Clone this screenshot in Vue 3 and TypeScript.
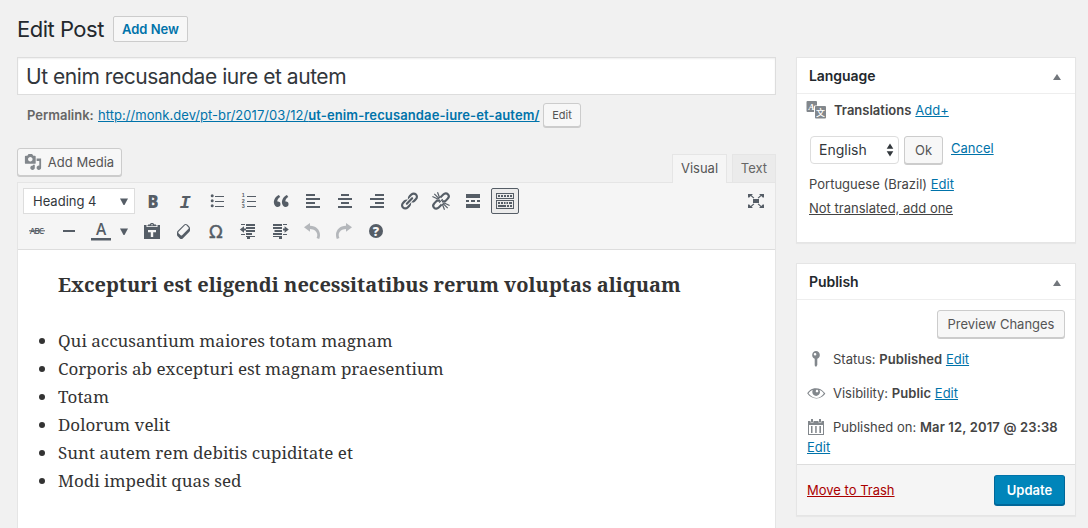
<script setup lang="ts">
interface ToolButton {
  name: string
  kind?: 'active' | 'muted' | 'arrow'
}

const postItems: string[] = [
  'Qui accusantium maiores totam magnam',
  'Corporis ab excepturi est magnam praesentium',
  'Totam',
  'Dolorum velit',
  'Sunt autem rem debitis cupiditate et',
  'Modi impedit quas sed',
]

const rowOne: ToolButton[] = [
  { name: 'bold' }, { name: 'italic' }, { name: 'ul' }, { name: 'ol' }, { name: 'quote' },
  { name: 'left' }, { name: 'center' }, { name: 'right' }, { name: 'link' }, { name: 'unlink' },
  { name: 'more' }, { name: 'sink', kind: 'active' },
]

const rowTwo: ToolButton[] = [
  { name: 'strike' }, { name: 'hr' }, { name: 'color' }, { name: 'caret', kind: 'arrow' },
  { name: 'paste' }, { name: 'eraser' }, { name: 'omega' }, { name: 'outdent' }, { name: 'indent' },
  { name: 'undo', kind: 'muted' }, { name: 'redo', kind: 'muted' }, { name: 'help' },
]

const icons: Record<string, string> = {
  bold: '<text x="10" y="16.5" text-anchor="middle" font-family="Open Sans" font-weight="800" font-size="17.5" textLength="11" lengthAdjust="spacingAndGlyphs">B</text>',
  italic: '<text x="10" y="16.5" text-anchor="middle" font-family="Liberation Mono" font-weight="700" font-style="italic" font-size="18.5">I</text>',
  ul: '<circle cx="5.2" cy="4.7" r="1.5"/><circle cx="5.2" cy="9.7" r="1.5"/><circle cx="5.2" cy="14.7" r="1.5"/><path d="M8 5h9v1H8zM8 10h9v1H8zM8 15h9v1H8z"/>',
  ol: '<g font-family="Liberation Sans" font-weight="700" font-size="5.4"><text x="2.8" y="6.4">1</text><text x="2.8" y="11.7">2</text><text x="2.8" y="17">3</text></g><path d="M8 5h9v1H8zM8 10h9v1H8zM8 15h9v1H8z"/>',
  quote: '<path d="M9.49 13.22c0-.74-.2-1.38-.61-1.9-.62-.78-1.83-.88-2.53-.72-.29-1.65 1.11-3.75 2.92-4.65L7.88 4c-2.73 1.3-5.42 4.28-4.96 8.05C3.21 14.43 4.59 16 6.54 16c.85 0 1.56-.25 2.12-.75s.83-1.18.83-2.03zm8.05 0c0-.74-.2-1.38-.61-1.9-.63-.78-1.83-.88-2.53-.72-.29-1.65 1.11-3.75 2.92-4.65L15.93 4c-2.73 1.3-5.41 4.28-4.95 8.05.29 2.38 1.66 3.95 3.61 3.95.85 0 1.56-.25 2.12-.75s.83-1.18.83-2.03z"/>',
  left: '<path d="M12 5V3H3v2h9zm5 4V7H3v2h14zm-5 4v-2H3v2h9zm5 4v-2H3v2h14z"/>',
  center: '<path d="M14 5V3H6v2h8zm3 4V7H3v2h14zm-3 4v-2H6v2h8zm3 4v-2H3v2h14z"/>',
  right: '<path d="M17 5V3H8v2h9zm0 4V7H3v2h14zm0 4v-2H8v2h9zm0 4v-2H3v2h14z"/>',
  link: '<path d="M17.74 2.76c1.68 1.69 1.68 4.41 0 6.1l-1.53 1.52c-1.12 1.12-2.7 1.47-4.14 1.09l2.62-2.61.76-.77.76-.76c.84-.84.84-2.2 0-3.04-.84-.85-2.2-.85-3.04 0l-.77.76-3.38 3.38c-.37-1.44-.02-3.02 1.1-4.14l1.52-1.53c1.69-1.68 4.42-1.68 6.1 0zM8.59 13.43l5.34-5.34c.42-.42.42-1.1 0-1.52-.44-.43-1.13-.39-1.53 0l-5.33 5.34c-.42.42-.42 1.1 0 1.52.44.43 1.13.39 1.52 0zm-.76 2.29l4.14-4.15c.38 1.44.03 3.02-1.09 4.14l-1.52 1.53c-1.69 1.68-4.41 1.68-6.1 0-1.68-1.68-1.68-4.42 0-6.1l1.53-1.52c1.12-1.12 2.7-1.47 4.14-1.1l-4.14 4.15c-.85.84-.85 2.2 0 3.05.84.84 2.2.84 3.04 0z"/>',
  unlink: '<path d="M9.300 6.500l3-3c1.500-1.500 3.400-1.500 4.600-.3s1.200 3.100-.3 4.600l-2.600 2.600h-3M10.700 13.500l-3 3c-1.500 1.500-3.400 1.500-4.600.3s-1.200-3.100.3-4.600L6 9.600h3" fill="none" stroke="currentColor" stroke-width="2.100"/><path d="M1.400 5.500l6 2.800M3.300 2.800l4.800 4.800M6.500 1.200l2.300 6M18.600 14.500l-6-2.800M16.700 17.200l-4.800-4.800M13.500 18.800l-2.300-6M8.200 11.700l3.500-3.500" fill="none" stroke="currentColor" stroke-width="1.200"/>',
  more: '<path d="M17 7V3H3v4h14zM6 11V9H3v2h3zm6 0V9H8v2h4zm5 0V9h-3v2h3zm0 6v-4H3v4h14z"/>',
  sink: '<path fill-rule="evenodd" d="M1 2h18v6H1zM2 3v4h16V3zM1 9h18v9H1zM2 10v7h16v-7z"/><path d="M3 4h2v2H3zM6 4h2v2H6zM9 4h2v2H9zM12 4h2v2h-2zM15 4h2v2h-2zM3 11h2v2H3zM6 11h2v2H6zM9 11h1.500v2H9zM11.500 11H13v2h-1.500zM14 11h3v2h-3zM3 14h8v2H3zM12 14h2v2h-2zM15 14h2v2h-2z"/>',
  strike: '<text x="10" y="13" text-anchor="middle" font-family="Open Sans" font-weight="600" font-size="8.5" textLength="14.5">ABC</text><path d="M2 9.300h16v1H2z"/>',
  hr: '<path d="M4 9h12v2H4z"/>',
  color: '<text x="10" y="14" text-anchor="middle" font-family="Open Sans" font-weight="600" font-size="15.5">A</text><path d="M0 17h20v2.500H0z"/>',
  caret: '<path d="M6 7.500h8L10.500 14h-1z"/>',
  paste: '<path d="M6 4.500V3.500h1.700C8 2.500 8.800 2 10 2s2 .5 2.300 1.500H14v1z"/><path d="M2 4h2.500v2h11V4H18v14H2z"/><path fill="#f5f5f5" d="M6 9h8v2.200h-2.800V16H8.800v-4.800H6z"/><path d="M5.500 4h9v1.200h-9z"/><circle cx="10" cy="3.700" r=".7" fill="#f5f5f5"/>',
  eraser: '<path fill-rule="evenodd" d="M14.290 4.590l1.100 1.110c.41.400.61.940.61 1.470v2.120c0 .53-.2 1.070-.61 1.470l-6.630 6.630c-.4.410-.94.610-1.470.610s-1.070-.2-1.470-.61l-1.110-1.100-1.100-1.110c-.41-.4-.61-.94-.61-1.470v-2.120c0-.54.2-1.070.61-1.480l6.630-6.620c.4-.41.940-.61 1.470-.61s1.060.2 1.470.61zM8.080 14.290l6.420-6.420c.39-.39.39-1.030 0-1.430L12.360 4.300c-.19-.19-.45-.29-.72-.29s-.52.100-.71.290L4.510 10.720c-.39.400-.39 1.040 0 1.430l2.140 2.140c.38.380 1.040.380 1.430 0z"/>',
  omega: '<text x="10" y="17" text-anchor="middle" font-family="DejaVu Sans" font-weight="400" font-size="18" stroke="currentColor" stroke-width=".4">Ω</text>',
  outdent: '<path d="M3 3h4v1H3zm5 0h9v2H8zm0 3h9v2H8zm0 3h9v2H8zm0 3h6v2H8zM3 13h4v1H3zm5 2h9v1H8zm1 1h3v2H9zM1.800 8.500L6 5.300V7.500h2v2H6v2.200z"/>',
  indent: '<path d="M3 3h9v2H3zm10 0h4v1h-4zM3 6h9v2H3zm1.500 3H12v2H4.500zM3 12h9v2H3zm10 1h4v1h-4zM3 15h9v1H3zm6 1h3v2H9zM18.800 8.500L14.600 5.300V7.500H13v2h1.600v2.200z"/>',
  undo: '<path d="M2 6.300L8 2v2.800c6 0 10 4.200 10 9.200 0 1.400-.2 2.700-.8 4l-2.600-1c.5-1 .7-2 .7-2.900C15.300 10.400 12.300 8 8 7.900v2.800z"/>',
  redo: '<path d="M18 6.300L12 2v2.800c-6 0-10 4.200-10 9.200 0 1.400.2 2.700.8 4l2.600-1c-.5-1-.7-2-.7-2.900C4.700 10.400 7.700 8 12 7.900v2.800z"/>',
  help: '<circle cx="10" cy="10" r="7"/><text x="10" y="14.6" text-anchor="middle" font-family="Open Sans" font-weight="800" font-size="12.5" fill="#f5f5f5">?</text>',
  full: '<path d="M7 8h6v4H7zM2 3h5L5.600 4.300l2.700 2.500-.8.800-2.800-2.600L3.300 6.500H2zM18 3h-5l1.400 1.300-2.700 2.500.8.800L15.300 5l1.400 1.500H18zM2 17h5l-1.400-1.300 2.700-2.500-.8-.8L4.700 15l-1.400-1.500H2zM18 17h-5l1.400-1.300-2.700-2.500.8-.8 2.800 2.600 1.400-1.500H18z"/>',
  media: '<path d="M13 11V4c0-.55-.45-1-1-1h-1.670L9 1H5L3.670 3H2c-.55 0-1 .45-1 1v7c0 .55.450 1 1 1h10c.55 0 1-.45 1-1zM7 4.500c1.380 0 2.500 1.120 2.500 2.500S8.380 9.500 7 9.500 4.500 8.380 4.500 7 5.620 4.500 7 4.500zM14 6h5v10.500c0 1.380-1.120 2.500-2.500 2.500S14 17.880 14 16.500s1.120-2.500 2.500-2.500c.17 0 .34.020.5.050V9h-3V6zm-4 8.050V13h2v3.500c0 1.380-1.120 2.500-2.500 2.500S7 17.880 7 16.500 8.120 14 9.500 14c.17 0 .34.020.5.050z"/>',
  translate: '<path d="M1.500 1H10a1 1 0 0 1 1 1v3.500H9.200A1.200 1.200 0 0 0 8 6.700V12H1.500a1 1 0 0 1-1-1V2a1 1 0 0 1 1-1z"/><path d="M10 6h9a1 1 0 0 1 1 1v10.500a1 1 0 0 1-1 1h-9a1 1 0 0 1-1-1V7a1 1 0 0 1 1-1z"/><text x="5.500" y="9.500" text-anchor="middle" font-family="Liberation Serif" font-weight="700" font-style="italic" font-size="9" fill="#fff">A</text><text x="14.500" y="15.700" text-anchor="middle" font-family="Noto Sans CJK SC" font-size="9" font-weight="500" fill="#fff">文</text>',
  pin: '<path fill-rule="evenodd" d="M10 2a4 4 0 0 1 1.300 7.700V16L10 18l-1.300-1.500V9.700A4 4 0 0 1 10 2zM9 4a1.300 1.300 0 1 0 .1 2.600A1.300 1.300 0 0 0 9 4z"/>',
  eye: '<path fill-rule="evenodd" d="M18.300 9.500C15 4.900 8.500 3.800 3.900 7.200 2.700 8.100 1.700 9.100 1.200 10.300c3.400 5.300 10.200 6.700 15.200 3.200 1.300-.9 2.400-2 2.900-3.200zM10.100 7.200c.5-.5 1.300-.5 1.800 0s.5 1.300 0 1.800-1.300.5-1.800 0-.5-1.300 0-1.800zM10.200 14.900c-3.200 0-6-1.900-7.700-4.600C3.600 8.800 5 7.600 6.800 7c-.3.600-.5 1.300-.5 2 0 2.100 1.700 3.900 3.800 3.900s3.900-1.700 3.900-3.800c0-.8-.2-1.500-.6-2.100 1.800.7 3.300 1.800 4.400 3.400-1.700 2.700-4.400 4.500-7.600 4.500z"/>',
  calendar: '<path fill-rule="evenodd" d="M2 4h2.500v1.500h3V4h5v1.500h3V4H18v14H2zM3 8v9h14V8zM5 2h2v3H5zM13 2h2v3h-2zM5 9h1.500v7H5zm4.200 0h1.500v7H9.200zm4.200 0H15v7h-1.600z"/>',
}
</script>

<template>
  <div class="page">
    <main class="main">
      <header class="heading">
        <h1>Edit Post</h1>
        <a class="btn add-new">Add New</a>
      </header>

      <div class="title-field">Ut enim recusandae iure et autem</div>

      <div class="permalink">
        <b class="plabel">Permalink:</b>
        <a class="purl"><span>http://monk.dev/pt-br/2017/03/12/</span><b>ut-enim-recusandae-iure-et-autem/</b></a>
        <button class="btn small">Edit</button>
      </div>

      <div class="tools">
        <button class="btn media"><svg viewBox="0 0 20 20" v-html="icons.media" />Add Media</button>
        <div class="tabs">
          <div class="tab current">Visual</div>
          <div class="tab">Text</div>
        </div>
      </div>

      <section class="editor">
        <div class="toolbar">
          <div class="row">
            <div class="format">Heading 4<svg viewBox="0 0 20 20" v-html="icons.caret" /></div>
            <span v-for="b in rowOne" :key="b.name" class="tool" :class="b.kind"><svg viewBox="0 0 20 20" v-html="icons[b.name]" /></span>
            <span class="tool full"><svg viewBox="0 0 20 20" v-html="icons.full" /></span>
          </div>
          <div class="row">
            <span v-for="b in rowTwo" :key="b.name" class="tool" :class="b.kind"><svg viewBox="0 0 20 20" v-html="icons[b.name]" /></span>
          </div>
        </div>
        <div class="content">
          <h4>Excepturi est eligendi necessitatibus rerum voluptas aliquam</h4>
          <ul>
            <li v-for="item in postItems" :key="item">{{ item }}</li>
          </ul>
        </div>
      </section>
    </main>

    <aside class="side">
      <section class="box language">
        <h2>Language<i class="toggle" /></h2>
        <div class="translations">
          <svg viewBox="0 0 20 20" v-html="icons.translate" />
          <b>Translations</b><a class="link">Add+</a>
        </div>
        <div class="chooser">
          <div class="select">English<svg viewBox="0 0 8 14"><path d="M4 .5l3.300 5.300H.7zM4 13.500L.7 8.200h6.600z" /></svg></div>
          <button class="btn ok">Ok</button>
          <a class="link">Cancel</a>
        </div>
        <p class="lang">Portuguese (Brazil) <a class="link">Edit</a></p>
        <p class="lang"><a class="plain">Not translated, add one</a></p>
      </section>

      <section class="box publish">
        <h2>Publish<i class="toggle" /></h2>
        <div class="preview"><button class="btn">Preview Changes</button></div>
        <div class="info"><svg viewBox="0 0 20 20" v-html="icons.pin" /><span>Status: <b>Published</b> <a class="link">Edit</a></span></div>
        <div class="info"><svg viewBox="0 0 20 20" v-html="icons.eye" /><span>Visibility: <b>Public</b> <a class="link">Edit</a></span></div>
        <div class="info"><svg viewBox="0 0 20 20" v-html="icons.calendar" /><span>Published on: <b class="stamp">Mar 12, 2017 @ 23:38</b></span></div>
        <div class="info edit-date"><a class="link">Edit</a></div>
        <footer>
          <a class="trash">Move to Trash</a>
          <button class="btn primary">Update</button>
        </footer>
      </section>
    </aside>
  </div>
</template>

<style>
body {
  background: #f1f1f1;
}
</style>

<style scoped>
* {
  box-sizing: border-box;
}
svg {
  display: block;
  width: 20px;
  height: 20px;
  fill: currentColor;
  flex: none;
  overflow: visible;
}
b {
  font-weight: 600;
}
.page {
  display: flex;
  gap: 20px;
  height: 528px;
  overflow: hidden;
  padding: 0 12px 0 17px;
  background: #f1f1f1;
  color: #444;
  font: 13px/20px Inter, "Liberation Sans", sans-serif;
}
.main {
  width: 759px;
  display: flex;
  flex-direction: column;
}
.btn {
  display: inline-flex;
  align-items: center;
  justify-content: center;
  margin: 0;
  padding: 0;
  height: 28px;
  border: 1px solid #ccc;
  border-radius: 3px;
  background: #f7f7f7;
  box-shadow: 0 1px 0 #ccc;
  color: #555;
  font: inherit;
  white-space: nowrap;
}
.heading {
  display: flex;
  align-items: center;
  height: 57px;
}
h1 {
  width: 96px;
  margin: 0;
  color: #23282d;
  font-size: 22px;
  font-weight: 400;
  letter-spacing: -.5px;
  white-space: nowrap;
}
.add-new {
  width: 75px;
  height: 26px;
  margin-top: 1px;
  border-radius: 2px;
  box-shadow: none;
  color: #0073aa;
  font-weight: 600;
}
.title-field {
  display: flex;
  align-items: center;
  height: 38px;
  padding: 1px 8px 0;
  border: 1px solid #ddd;
  background: #fff;
  box-shadow: inset 0 1px 2px rgba(0, 0, 0, .07);
  color: #32373c;
  font-size: 21px;
  letter-spacing: -.45px;
}
.permalink {
  display: flex;
  align-items: center;
  height: 40px;
  padding-left: 10px;
}
.plabel {
  width: 71px;
  color: #666;
}
.purl,
.link {
  color: #0073aa;
  text-decoration: underline;
}
.purl {
  width: 445px;
  white-space: nowrap;
  letter-spacing: .05px;
}
.purl b {
  letter-spacing: .12px;
}
.small {
  width: 38px;
  height: 24px;
  font-size: 11px;
}
.tools {
  display: flex;
  justify-content: space-between;
  align-items: flex-start;
  height: 48px;
  padding-top: 13px;
}
.media {
  width: 105px;
  gap: 6px;
  padding-right: 1px;
}
.media svg {
  width: 18px;
  height: 18px;
  color: #82878c;
}
.tabs {
  display: flex;
  gap: 5px;
  margin-top: 6px;
  height: 29px;
  z-index: 1;
}
.tab {
  width: 44px;
  height: 28px;
  padding-top: 3px;
  border: 1px solid #e5e5e5;
  border-bottom: 0;
  background: #ebebeb;
  color: #666;
  text-align: center;
}
.tab.current {
  width: 55px;
  height: 29px;
  background: #f5f5f5;
  color: #555;
}
.editor {
  flex: 1;
  margin-top: -1px;
  border: 1px solid #e5e5e5;
  border-bottom: 0;
  background: #fff;
}
.toolbar {
  height: 67px;
  padding: 3px 5px;
  border-bottom: 1px solid #ddd;
  background: #f5f5f5;
  color: #555d66;
}
.row {
  display: flex;
  align-items: center;
  height: 30px;
}
.format {
  display: flex;
  align-items: center;
  justify-content: space-between;
  width: 112px;
  height: 26px;
  margin-right: 2px;
  padding: 0 0 0 9px;
  border: 1px solid #ddd;
  background: #fff;
  color: #32373c;
}
.format svg {
  color: #555d66;
}
.tool {
  display: flex;
  align-items: center;
  justify-content: center;
  width: 28px;
  height: 26px;
  margin: 0 2px;
}
.row:nth-child(2) .tool:first-child {
  margin-left: 0;
}
.active {
  border: 1px solid #555d66;
  border-radius: 2px;
  background: #ebebeb;
}
.muted {
  opacity: .4;
}
.arrow {
  width: 18px;
  margin: 0 3px 0 -2px;
}
.full {
  margin-left: auto;
  margin-right: 0;
}
.content {
  padding: 20px 40px 0;
  color: #333;
  font: 17px/28px "Noto Serif", serif;
}
h4 {
  margin: 0;
  font-size: 20px;
  font-weight: 700;
  line-height: 30px;
}
ul {
  margin: 27px 0 0;
  padding: 0;
}
.side {
  width: 280px;
  padding-top: 57px;
}
.box {
  border: 1px solid #e5e5e5;
  background: #fff;
  box-shadow: 0 1px 1px rgba(0, 0, 0, .04);
}
h2 {
  display: flex;
  align-items: center;
  justify-content: space-between;
  height: 36px;
  margin: 0;
  padding: 0 14px 0 12px;
  border-bottom: 1px solid #eee;
  color: #23282d;
  font-size: 14px;
  font-weight: 600;
  letter-spacing: -.05px;
}
.toggle {
  margin-top: 3px;
  border: 4px solid transparent;
  border-top: 0;
  border-bottom: 6px solid #72777c;
}
.language {
  height: 186px;
}
.translations {
  display: flex;
  align-items: center;
  height: 32px;
  padding-left: 9px;
}
.translations svg {
  color: #82878c;
}
.translations b {
  margin: 0 4px 0 8px;
}
.translations .link {
  margin-top: -1px;
}
.chooser {
  display: flex;
  align-items: center;
  height: 44px;
  padding: 4px 0 0 13px;
}
.select {
  display: flex;
  align-items: center;
  justify-content: space-between;
  width: 89px;
  height: 28px;
  margin-right: 5px;
  padding: 0 4px 0 8px;
  border: 1px solid #ddd;
  border-radius: 4px;
  color: #32373c;
  font-size: 14px;
}
.select svg {
  width: 8px;
  height: 14px;
}
.ok {
  width: 39px;
  margin: -1px 8px 0 0;
}
.chooser .link {
  margin-top: -4px;
}
.lang {
  height: 24px;
  margin: 0;
  padding-left: 12px;
}
.chooser + .lang {
  margin-top: 4px;
}
.plain {
  text-decoration: underline;
}
.publish {
  margin-top: 20px;
  height: 253px;
}
.preview {
  display: flex;
  justify-content: flex-end;
  height: 42px;
  padding: 10px 10px 0 0;
}
.preview .btn {
  width: 128px;
}
.info {
  display: flex;
  align-items: center;
  gap: 7px;
  height: 34px;
  padding-left: 9px;
}
.info svg {
  color: #82878c;
}
.info b {
  letter-spacing: .1px;
}
.info .stamp {
  letter-spacing: .15px;
}
.edit-date {
  height: 20px;
  padding: 0 0 15px 10px;
}
footer {
  display: flex;
  align-items: center;
  justify-content: space-between;
  height: 51px;
  padding: 0 10px;
  border-top: 1px solid #ddd;
  background: #f5f5f5;
}
.trash {
  margin-top: -1px;
  color: #a00;
  text-decoration: underline;
}
.primary {
  width: 71px;
  height: 30px;
  border-color: #0073aa #006799 #006799;
  background: #0085ba;
  box-shadow: 0 1px 0 #006799;
  color: #fff;
  font-weight: 600;
}
</style>
